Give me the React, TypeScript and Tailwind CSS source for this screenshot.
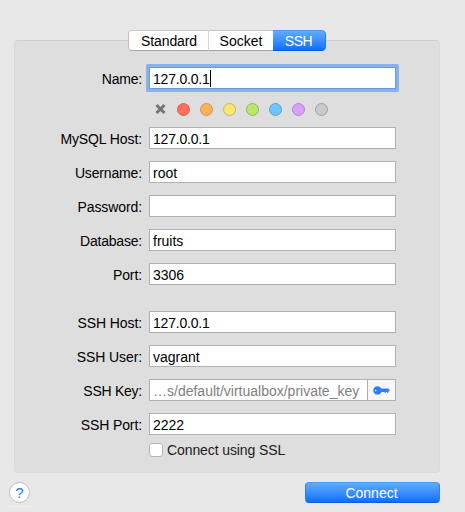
import type { ReactNode } from "react";

const field = "h-[22px] w-[247px] border bg-white flex items-center pl-[3px] pt-[2px] leading-none whitespace-nowrap";
const plain = `${field} border-[#b0b0b0]`;

function Row({ label, children, gap = "mt-3", track = "tracking-[-0.1px]" }: { label: string; children: ReactNode; gap?: string; track?: string }) {
  return (
    <div className={`flex h-[22px] items-center ${gap}`}>
      <div className={`w-[127px] shrink-0 pt-[2px] text-right leading-none whitespace-nowrap ${track}`}>{label}</div>
      <div className="ml-[7px] shrink-0">{children}</div>
    </div>
  );
}

const swatches = [
  "bg-[#fd705c] border-[#cf6557]",
  "bg-[#fdb05b] border-[#ce9455]",
  "bg-[#fae571] border-[#c5b766]",
  "bg-[#b8e76c] border-[#92b462]",
  "bg-[#6bc5fe] border-[#609fc8]",
  "bg-[#dda0f8] border-[#af88c2]",
  "bg-[#cacaca] border-[#a0a0a0]",
];

export default function App() {
  return (
    <div className="h-[512px] w-[465px] overflow-hidden bg-[#e8e8e8] pt-[30px] font-['Liberation_Sans',Arial,sans-serif] text-[14px] text-black">
      <div className="relative z-10 ml-[128px] flex h-[21px] w-[198px] overflow-hidden rounded-[4px] leading-none">
        <div className="flex w-[81px] items-center justify-center rounded-l-[4px] border border-r-[#d6d6d6] border-b-[#a5a5a5] border-l-[#c0c0c0] border-t-[#c5c5c5] bg-white pl-px tracking-[-0.1px]">Standard</div>
        <div className="flex w-[64px] items-center justify-center border-y border-b-[#a5a5a5] border-t-[#c5c5c5] bg-white">Socket</div>
        <div className="flex w-[53px] items-center justify-center rounded-r-[4px] border border-b-[#0b5ce5] border-l-0 border-r-[#2378ee] border-t-[#4b9bf5] bg-gradient-to-b from-[#61aafb] to-[#0a6fff] pr-px tracking-[-0.5px] text-white">SSH</div>
      </div>
      <div className="-mt-[11px] ml-[14px] h-[433px] w-[426px] rounded-[4px] border border-[#dadada] border-t-[#cfcfcf] bg-[#dedede] pt-[26px]">
        <Row label="Name:" gap="" track="tracking-[-0.2px]">
          <div className={`${field} rounded-[0.5px] border-[#6d9ad5] tracking-[-0.2px] shadow-[0_0_0_3px_#86b3ec]`}>
            127.0.0.1<span className="-mt-[2px] h-[17px] w-px bg-black" />
          </div>
        </Row>
        <div className="mt-[13px] ml-[139.5px] flex h-[13px] items-center">
          <svg className="mr-[11px] shrink-0" width="11" height="13" viewBox="0 0 11 13" aria-hidden="true">
            <path d="M1.5 3L9.5 11M9.5 3L1.5 11" stroke="#747474" strokeWidth="3" />
          </svg>
          <div className="flex gap-[10px] pt-px">
            {swatches.map((c) => <span key={c} className={`h-[13px] w-[13px] rounded-full border ${c}`} />)}
          </div>
        </div>
        <Row label="MySQL Host:"><div className={`${plain} tracking-[-0.2px]`}>127.0.0.1</div></Row>
        <Row label="Username:" track="tracking-[-0.15px]"><div className={plain}>root</div></Row>
        <Row label="Password:"><div className={plain} /></Row>
        <Row label="Database:" track="tracking-[-0.2px]"><div className={plain}>fruits</div></Row>
        <Row label="Port:"><div className={plain}>3306</div></Row>
        <Row label="SSH Host:" gap="mt-[26px]"><div className={`${plain} tracking-[-0.2px]`}>127.0.0.1</div></Row>
        <Row label="SSH User:"><div className={plain}>vagrant</div></Row>
        <Row label="SSH Key:" track="tracking-[-0.25px]">
          <div className="flex h-[22px] w-[247px] border border-[#b0b0b0] bg-white">
            <div className="w-[217px] pt-[4px] pl-[3px] leading-none whitespace-nowrap text-[#808080]">…s/default/virtualbox/private_key</div>
            <div className="flex flex-1 items-center justify-center border-l border-[#b0b0b0] bg-[#f7f7f7]">
              <svg width="17" height="9" viewBox="0 0 17 9" aria-hidden="true">
                <path fillRule="evenodd" fill="#2e7ff9" d="M4.4.2C6.5.2 7.8 1.2 8.4 2.6H15.3L16.8 4.1L15.5 5.7V6.8H14V5.9H13V6.8H11.4V5.9H8.4C7.8 7.5 6.5 8.6 4.4 8.6C2 8.6.3 6.8.3 4.4S2 .2 4.4.2ZM2.7 3.8a.7.7 0 1 0 0 1.4a.7.7 0 1 0 0-1.4Z" />
              </svg>
            </div>
          </div>
        </Row>
        <Row label="SSH Port:"><div className={plain}>2222</div></Row>
        <div className="mt-2 ml-[134px] flex h-[14px] items-center leading-none">
          <span className="h-[14px] w-[14px] rounded-[3px] border border-[#b5b5b5] bg-white" />
          <span className="ml-[4px] tracking-[-0.1px] text-[#1c1c1c]">Connect using SSL</span>
        </div>
      </div>
      <div className="mt-[8px] ml-[9px] flex w-[431px] items-center justify-between">
        <div className="flex h-[21px] w-[21px] items-center justify-center rounded-full border border-[#bcbcbc] bg-white text-[15px] leading-none text-[#147bfd]">?</div>
        <div className="mt-px flex h-[21px] w-[135px] items-center justify-center rounded-[4px] border border-x-[#2b80f0] border-b-[#0b5ce5] border-t-[#4b9bf5] bg-gradient-to-b from-[#61aafb] to-[#0a6fff] pr-[2px] leading-none text-white">Connect</div>
      </div>
      <div className="mt-[3px] ml-[7px] h-px w-[25px] bg-[#efefef]" />
    </div>
  );
}
